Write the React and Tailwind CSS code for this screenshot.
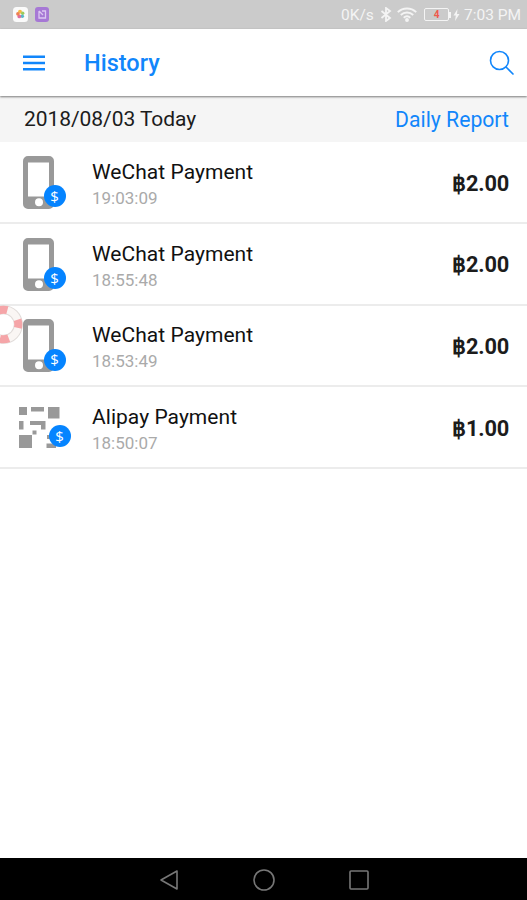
import React from "react";

const payments = [
  { id: 1, name: "WeChat Payment", time: "19:03:09", amount: "฿2.00", type: "phone" },
  { id: 2, name: "WeChat Payment", time: "18:55:48", amount: "฿2.00", type: "phone" },
  { id: 3, name: "WeChat Payment", time: "18:53:49", amount: "฿2.00", type: "phone" },
  { id: 4, name: "Alipay Payment", time: "18:50:07", amount: "฿1.00", type: "qr" },
];

function PhoneIcon() {
  return (
    <svg width="31" height="53" viewBox="0 0 31 53">
      <path
        fillRule="evenodd"
        fill="#999"
        d="M5 0h21a5 5 0 0 1 5 5v43a5 5 0 0 1-5 5H5a5 5 0 0 1-5-5V5a5 5 0 0 1 5-5ZM5 6.500v34h21v-34ZM16 42.200a4 4 0 1 0 0 8 4 4 0 0 0 0-8Z"
      />
    </svg>
  );
}

function QrIcon() {
  return (
    <svg width="41" height="41" viewBox="0 0 41 41" fill="#999">
      <path d="M0 0h8v8H0zM12 0h13v4.500H12zM29 0h11.500v11.500H29zM0 14h4.500v8.500H0zM11 14h15.500v8.500H22v-4.500H11zM13.500 23.500h4v4h-4zM0 28h13v13H0zM28 28h5v4h-5zM27.500 36.500H37V41h-9.500z" />
    </svg>
  );
}

function PaymentIcon({ type }) {
  return (
    <div className="w-[92px] h-[53px] shrink-0 relative">
      <div className={type === "qr" ? "pl-[18.500px] pt-[6px]" : "pl-[23px]"}>
        {type === "qr" ? <QrIcon /> : <PhoneIcon />}
      </div>
      <span
        className={`absolute size-[22px] rounded-full bg-[#0584ff] text-white text-[15px] leading-none font-medium font-['Open_Sans',sans-serif] flex items-center justify-center ${
          type === "qr" ? "left-[48.500px] top-[24px]" : "left-[43.500px] top-[29.500px]"
        }`}
      >
        $
      </span>
    </div>
  );
}

function StatusBar() {
  return (
    <div className="h-[29px] bg-[#cbcbcb] flex items-center pl-[13px] pr-[6px] text-[#f4f4f4]">
      <svg width="15" height="15" viewBox="0 0 15 15">
        <rect width="15" height="15" rx="3.500" fill="#fafafa" />
        <circle cx="7" cy="4.800" r="2" fill="#f4bb45" />
        <circle cx="9.700" cy="6.300" r="1.700" fill="#9ccb5b" />
        <circle cx="9.300" cy="9.200" r="1.800" fill="#59b7c9" />
        <circle cx="6.300" cy="9.400" r="1.900" fill="#e06e9c" />
        <circle cx="4.900" cy="6.900" r="1.800" fill="#ee8052" />
      </svg>
      <svg className="ml-[7px]" width="14" height="15" viewBox="0 0 14 15" fill="none">
        <rect width="14" height="15" rx="3" fill="#a678d5" />
        <path d="M4 4v7h6.500V4H7M4 4l4 4" stroke="#dcc8f2" strokeWidth="1.300" />
      </svg>
      <div className="ml-auto flex items-center">
        <span className="text-[15.500px] leading-none pt-[2px] w-[39px] whitespace-nowrap">0K/s</span>
        <svg width="12" height="15" viewBox="0 0 12 15" fill="none" stroke="currentColor" strokeWidth="1.800">
          <path d="m1.500 4 8.500 7-4 3V1l4 3-8.500 7" />
        </svg>
        <svg className="ml-[5px]" width="20" height="15" viewBox="0 0 20 15" fill="none" stroke="currentColor" strokeWidth="1.900">
          <path d="M.8 5.200c5-5 13.400-5 18.400 0M3.800 8c3.500-3.300 8.900-3.300 12.400 0M6.700 10.700c2-1.700 4.600-1.700 6.600 0" />
          <circle cx="10" cy="13" r="1" fill="currentColor" />
        </svg>
        <div className="ml-[7px] w-[25px] h-[13px] border border-[#f4f4f4] rounded-[2px] flex items-center justify-center text-[10px] font-bold text-[#ee5a4d]">
          4
        </div>
        <div className="w-[2px] h-[6px] bg-[#f4f4f4]" />
        <svg className="ml-[2px]" width="7" height="12" viewBox="0 0 7 12" fill="currentColor">
          <path d="M4.500 0 .5 6.500h2.300L2 12l4.500-7H4z" />
        </svg>
        <span className="ml-[4px] text-[15.500px] leading-none pt-[2px] w-[57px] whitespace-nowrap">7:03 PM</span>
      </div>
    </div>
  );
}

function Header() {
  return (
    <div className="h-[67px] bg-white flex items-center pl-[23px] pr-[12px] relative z-10 shadow-[0_1px_2px_rgba(0,0,0,0.5)]">
      <svg width="22" height="16" viewBox="0 0 22 16" fill="#1186fb">
        <path d="M0 .5h22v2.500H0zM0 6.800h22v2.500H0zM0 13h22v2.500H0z" />
      </svg>
      <h1 className="ml-[39px] text-[23.500px] font-medium text-[#1186fb] pt-[3px]">History</h1>
      <svg className="ml-auto" width="26" height="26" viewBox="0 0 26 26" fill="none" stroke="#1186fb" strokeWidth="1.600">
        <circle cx="10.500" cy="10.500" r="9" />
        <path d="m17 17 7.500 7.500" />
      </svg>
    </div>
  );
}

function LifebuoyIcon() {
  return (
    <svg width="23" height="39" viewBox="0 0 23 39" fill="none">
      <circle cx="3.500" cy="19.500" r="14.800" stroke="#e1dcda" strokeWidth="9" />
      <circle cx="3.500" cy="19.500" r="14.800" stroke="#faf6f4" strokeWidth="7" />
      <circle
        cx="3.500"
        cy="19.500"
        r="14.800"
        stroke="#f5a5a8"
        strokeWidth="8"
        strokeDasharray="9 14.250"
        strokeDashoffset="5.500"
      />
    </svg>
  );
}

export default function App() {
  return (
    <div className="w-[527px] h-[900px] bg-white flex flex-col overflow-hidden relative font-['Roboto',sans-serif]">
      <StatusBar />
      <Header />

      <div className="h-[46px] bg-[#f5f5f5] flex items-center justify-between pl-6 pr-[18px] pt-[2px] text-[21px]">
        <span className="text-[#1c1c1c] tracking-[-0.06px]">2018/08/03 Today</span>
        <span className="text-[21.200px] text-[#1186fb]">Daily Report</span>
      </div>

      <div className="flex-1">
        {payments.map((p) => (
          <div
            key={p.id}
            className="h-[81.750px] border-b-2 border-[#ececec] flex items-center pt-px pr-[18px]"
          >
            <PaymentIcon type={p.type} />
            <div className="flex-1 pt-[5px]">
              <p className="text-[21px] leading-[26px] tracking-[0.04px] text-[#111]">{p.name}</p>
              <p className="text-[17px] leading-[26px] text-[#aaa]">{p.time}</p>
            </div>
            <p className="text-[21.800px] font-bold text-[#1c1c1c] pt-[3px] tracking-[-0.200px]">{p.amount}</p>
          </div>
        ))}
      </div>

      <div className="h-[42px] bg-black flex items-center justify-center gap-[74px] pt-[2px]">
        <svg width="20" height="22" viewBox="0 0 20 22" fill="none" stroke="#777" strokeWidth="1.600">
          <path d="M18 2v18L2 11z" strokeLinejoin="round" />
        </svg>
        <svg width="22" height="22" viewBox="0 0 22 22" fill="none" stroke="#777" strokeWidth="1.600">
          <circle cx="11" cy="11" r="10" />
        </svg>
        <svg width="20" height="20" viewBox="0 0 20 20" fill="none" stroke="#777" strokeWidth="1.600">
          <rect x="1" y="1" width="18" height="18" rx="1" />
        </svg>
      </div>

      {/* floating help button, half off the left edge */}
      <div className="absolute left-0 top-[305px]">
        <LifebuoyIcon />
      </div>
    </div>
  );
}
